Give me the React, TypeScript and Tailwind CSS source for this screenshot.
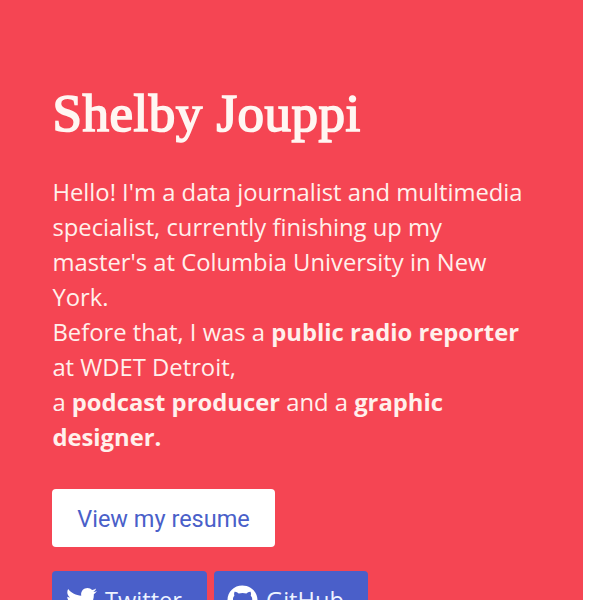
import React from "react";
import { FaTwitter, FaGithub } from "react-icons/fa";

export default function App() {
  return (
    <div className="flex h-[600px] w-[600px] overflow-hidden bg-white">
      <main className="w-[583px] shrink-0 bg-[#f54553] pl-[52px] pt-[83px] font-['Open_Sans',sans-serif] text-[#fff0ec]">
        <h1 className="whitespace-nowrap pl-[0.5px] font-['Liberation_Serif',serif] text-[53px] font-normal leading-[60px] tracking-[0.5px] text-[#fff6f2] [-webkit-text-stroke:1.7px_#fff6f2]">
          Shelby Jouppi
        </h1>
        <p className="mt-[32px] whitespace-nowrap pl-[0.4px] text-[23.8px] leading-[35px]">
          Hello! I'm a data journalist and multimedia
          <br />
          specialist, currently finishing up my
          <br />
          master's at Columbia University in New
          <br />
          York.
          <br />
          Before that, I was a <b>public radio reporter</b>
          <br />
          at WDET Detroit,
          <br />a <b>podcast producer</b> and a <b>graphic</b>
          <br />
          <b>designer.</b>
        </p>
        <a className="mt-[34px] flex h-[58px] w-[223px] items-center justify-center rounded-[4px] bg-white pt-[3px] font-[Roboto,sans-serif] text-[23.5px] text-[#4a5fc9]">
          View my resume
        </a>
        <div className="mt-[24px] flex gap-[7px] text-[23.6px] text-[#eef3ff]">
          <a className="flex h-[58px] w-[155px] items-center gap-[8px] rounded-[4px] bg-[#4a5fc9] pl-[14px]">
            <FaTwitter size={31} color="#ffffff" />
            <span className="pt-[2px]">Twitter</span>
          </a>
          <a className="flex h-[58px] w-[154px] items-center gap-[8px] rounded-[4px] bg-[#4a5fc9] pl-[13px]">
            <FaGithub size={31} color="#ffffff" />
            <span className="pt-[2px]">GitHub</span>
          </a>
        </div>
      </main>
    </div>
  );
}
